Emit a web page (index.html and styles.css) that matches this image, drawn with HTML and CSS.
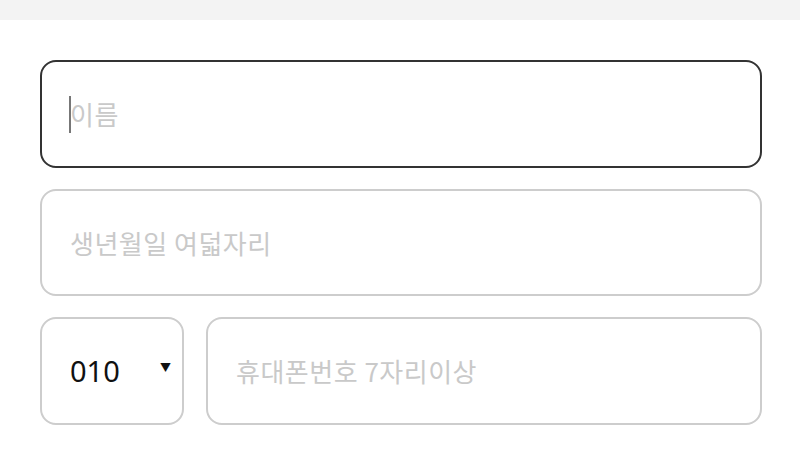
FILE: index.html
```html
<!DOCTYPE html>
<html>
<head>
  <title>회원정보 입력</title>
  <link rel="stylesheet" href="styles.css">
</head>
<body>
  <div class="top-bar"></div>
  <form class="join-form" name="joinForm" onsubmit="return false;">
    <div class="field focused">
      <span class="caret"></span>
      <input type="text" class="text-input" name="name" placeholder="이름">
    </div>
    <div class="field">
      <input type="text" class="text-input" name="birth" placeholder="생년월일 여덟자리">
    </div>
    <div class="phone-row">
      <div class="field select-field">
        <select class="prefix" name="prefix">
          <option value="010">010</option>
          <option value="011">011</option>
          <option value="016">016</option>
        </select>
        <span class="arrow">&#9660;</span>
      </div>
      <div class="field phone-field">
        <input type="text" class="text-input" name="phone" placeholder="휴대폰번호 7자리이상">
      </div>
    </div>
  </form>
</body>
</html>
```

FILE: styles.css
```css
body {
  margin: 0;
  background-color: #fff;
  font-family: "Noto Sans CJK KR", "Noto Sans", sans-serif;
}

.top-bar {
  height: 20px;
  background-color: #f3f3f3;
}

.join-form {
  margin: 40px 38px 0 40px;
  display: flex;
  flex-direction: column;
  gap: 21px;
}

.field {
  position: relative;
  height: 107.5px;
  box-sizing: border-box;
  border: 2px solid #cdcdcd;
  border-radius: 16px;
  display: flex;
  align-items: center;
  background-color: #fff;
}

.field.focused {
  border-color: #333;
}

.text-input {
  width: 100%;
  height: 100%;
  box-sizing: border-box;
  border: none;
  outline: none;
  background: transparent;
  padding: 0 0 0 28px;
  font-family: inherit;
  font-size: 26px;
  letter-spacing: 0.5px;
  color: #222;
}

.text-input::placeholder {
  color: #c9c9c9;
}

.caret {
  position: absolute;
  left: 27px;
  top: 34px;
  width: 2px;
  height: 37px;
  background-color: #777;
}

.phone-row {
  display: flex;
  gap: 22px;
}

.select-field {
  width: 144px;
  flex: none;
}

.phone-field {
  flex: 1;
}

.prefix {
  width: 100%;
  height: 100%;
  border: none;
  outline: none;
  background: transparent;
  appearance: none;
  -webkit-appearance: none;
  padding: 0 0 0 28px;
  font-family: "Noto Sans", sans-serif;
  font-size: 29px;
  color: #111;
}

.arrow {
  position: absolute;
  right: 11px;
  top: 40px;
  font-size: 11px;
  color: #111;
  pointer-events: none;
}
```
